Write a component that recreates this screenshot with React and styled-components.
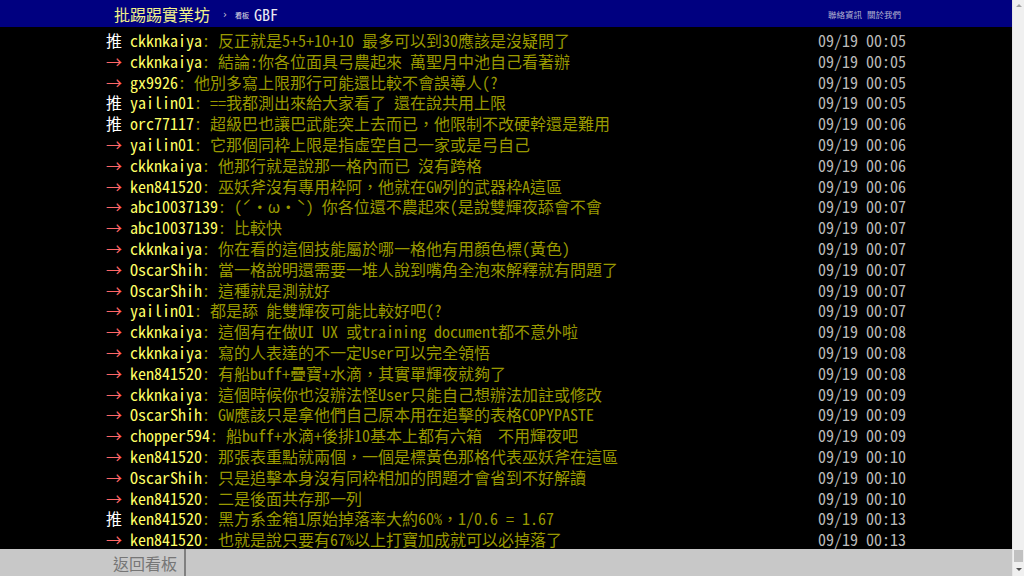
import styled, { createGlobalStyle } from "styled-components";

const pushes = [
  ["推", "ckknkaiya", "反正就是5+5+10+10 最多可以到30應該是沒疑問了", "09/19 00:05"],
  ["→", "ckknkaiya", "結論:你各位面具弓農起來 萬聖月中池自己看著辦", "09/19 00:05"],
  ["→", "gx9926", "他別多寫上限那行可能還比較不會誤導人(?", "09/19 00:05"],
  ["推", "yailin01", "==我都測出來給大家看了 還在說共用上限", "09/19 00:05"],
  ["推", "orc77117", "超級巴也讓巴武能突上去而已，他限制不改硬幹還是難用", "09/19 00:06"],
  ["→", "yailin01", "它那個同枠上限是指虛空自己一家或是弓自己", "09/19 00:06"],
  ["→", "ckknkaiya", "他那行就是說那一格內而已 沒有跨格", "09/19 00:06"],
  ["→", "ken841520", "巫妖斧沒有專用枠阿，他就在GW列的武器枠A這區", "09/19 00:06"],
  ["→", "abc10037139", "(ˊ・ω・ˋ) 你各位還不農起來(是說雙輝夜舔會不會", "09/19 00:07"],
  ["→", "abc10037139", "比較快", "09/19 00:07"],
  ["→", "ckknkaiya", "你在看的這個技能屬於哪一格他有用顏色標(黃色)", "09/19 00:07"],
  ["→", "OscarShih", "當一格說明還需要一堆人說到嘴角全泡來解釋就有問題了", "09/19 00:07"],
  ["→", "OscarShih", "這種就是測就好", "09/19 00:07"],
  ["→", "yailin01", "都是舔 能雙輝夜可能比較好吧(?", "09/19 00:07"],
  ["→", "ckknkaiya", "這個有在做UI UX 或training document都不意外啦", "09/19 00:08"],
  ["→", "ckknkaiya", "寫的人表達的不一定User可以完全領悟", "09/19 00:08"],
  ["→", "ken841520", "有船buff+疊寶+水滴，其實單輝夜就夠了", "09/19 00:08"],
  ["→", "ckknkaiya", "這個時候你也沒辦法怪User只能自己想辦法加註或修改", "09/19 00:09"],
  ["→", "OscarShih", "GW應該只是拿他們自己原本用在追擊的表格COPYPASTE", "09/19 00:09"],
  ["→", "chopper594", "船buff+水滴+後排10基本上都有六箱  不用輝夜吧", "09/19 00:09"],
  ["→", "ken841520", "那張表重點就兩個，一個是標黃色那格代表巫妖斧在這區", "09/19 00:10"],
  ["→", "OscarShih", "只是追擊本身沒有同枠相加的問題才會省到不好解讀", "09/19 00:10"],
  ["→", "ken841520", "二是後面共存那一列", "09/19 00:10"],
  ["推", "ken841520", "黑方系金箱1原始掉落率大約60%，1/0.6 = 1.67", "09/19 00:13"],
  ["→", "ken841520", "也就是說只要有67%以上打寶加成就可以必掉落了", "09/19 00:13"],
];

const bbsFont = `"Noto Sans Mono CJK TC", "Noto Sans CJK TC", monospace`;

const GlobalStyle = createGlobalStyle`
  html, body {
    margin: 0;
    padding: 0;
    overflow: hidden;
    background: #000;
  }
`;

export default function App() {
  return (
    <>
      <GlobalStyle />
      <Page>
        <Main>
          <TopBar>
            <TopBarInner>
              <Logo>批踢踢實業坊</Logo>
              <Crumb>›</Crumb>
              <BoardLabel>看板</BoardLabel>
              <BoardName>GBF</BoardName>
              <TopLinks>
                <span>聯絡資訊</span>
                <span>關於我們</span>
              </TopLinks>
            </TopBarInner>
          </TopBar>

          <Content>
            <PushList>
              {pushes.map(([tag, user, text, date], i) => (
                <Push key={i}>
                  <PushTag $push={tag === "推"}>{tag}</PushTag>
                  <PushUser>{user}</PushUser>
                  <PushText>: {text}</PushText>
                  <PushDate>{date}</PushDate>
                </Push>
              ))}
            </PushList>
          </Content>

          <Footer>
            <FooterInner>
              <BackButton>返回看板</BackButton>
            </FooterInner>
          </Footer>
        </Main>

        <ScrollTrack>
          <ScrollArrow $up />
          <ScrollSpace />
          <ScrollThumb />
          <ScrollArrow />
        </ScrollTrack>
      </Page>
    </>
  );
}

const Page = styled.div`
  display: flex;
  width: 1024px;
  height: 576px;
  overflow: hidden;
`;

const Main = styled.div`
  flex: 1;
  display: flex;
  flex-direction: column;
  min-width: 0;
`;

const TopBar = styled.div`
  height: 27px;
  background: #000080;
  flex-shrink: 0;
`;

const TopBarInner = styled.div`
  width: 800px;
  margin: 0 auto;
  box-sizing: border-box;
  padding: 0 5px 0 8px;
  height: 27px;
  display: flex;
  align-items: center;
  white-space: nowrap;
`;

const Logo = styled.span`
  font-family: ${bbsFont};
  font-size: 16px;
  color: #f2f28a;
`;

const Crumb = styled.span`
  font-family: "DejaVu Sans", sans-serif;
  font-size: 10px;
  color: #c8c8d8;
  margin: 2px 8px 0 13px;
`;

const BoardLabel = styled.span`
  font-family: "Noto Sans CJK TC", sans-serif;
  font-size: 7px;
  color: #e0e0e8;
  margin-top: 3px;
  margin-right: 5px;
`;

const BoardName = styled.span`
  font-family: ${bbsFont};
  font-size: 16px;
  color: #e8e8f0;
`;

const TopLinks = styled.div`
  margin-left: auto;
  display: flex;
  gap: 5px;
  font-family: "Noto Sans CJK TC", sans-serif;
  font-size: 8.5px;
  color: #b4b4d0;
`;

const Content = styled.div`
  flex: 1;
  background: #000;
  overflow: hidden;
  padding-top: 3px;
`;

const PushList = styled.div`
  width: 800px;
  margin: 0 auto;
  font-family: ${bbsFont};
  font-size: 16px;
  line-height: 20.8px;
`;

const Push = styled.div`
  display: flex;
  height: 20.8px;
  white-space: pre;
`;

const PushTag = styled.span`
  width: 24px;
  flex-shrink: 0;
  color: ${(p) => (p.$push ? "#fff" : "#f66")};
`;

const PushUser = styled.span`
  color: #ff6;
`;

const PushText = styled.span`
  color: #990;
`;

const PushDate = styled.span`
  margin-left: auto;
  color: #bbb;
`;

const Footer = styled.div`
  height: 27px;
  flex-shrink: 0;
  background: #c8c8c8;
`;

const FooterInner = styled.div`
  width: 800px;
  margin: 0 auto;
  height: 100%;
  display: flex;
`;

const BackButton = styled.div`
  padding: 0 7px;
  display: flex;
  align-items: center;
  border-right: 2px solid #808080;
  font-family: "Noto Sans CJK TC", sans-serif;
  font-size: 16px;
  color: #767676;
`;

const ScrollTrack = styled.div`
  width: 12px;
  flex-shrink: 0;
  display: flex;
  flex-direction: column;
  align-items: center;
  background: #f0f0f0;
  border-left: 1px solid #e6e6e6;
  box-sizing: border-box;
`;

const ScrollArrow = styled.div`
  width: 0;
  height: 0;
  margin: 4px 0;
  border-left: 3px solid transparent;
  border-right: 3px solid transparent;
  ${(p) =>
    p.$up
      ? "border-bottom: 3px solid #a3a3a3;"
      : "border-top: 3px solid #505050; margin-bottom: 5px;"}
`;

const ScrollSpace = styled.div`
  flex: 1;
`;

const ScrollThumb = styled.div`
  width: 9px;
  height: 12px;
  background: #c1c1c1;
  margin-bottom: 2px;
`;
